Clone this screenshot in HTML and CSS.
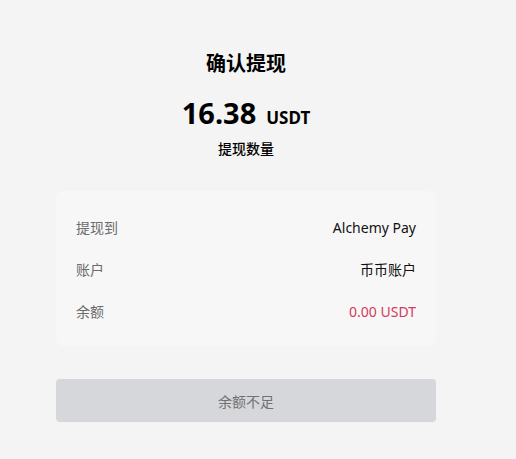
FILE: index.html
```html
<!DOCTYPE html>
<html lang="zh-CN">

<head>
  <meta charset="UTF-8">
  <meta name="viewport" content="width=device-width, initial-scale=1.0">
  <title>确认提现</title>
  <link rel="stylesheet" href="styles.css">
</head>

<body>
  <div class="page">
    <h1 class="title">确认提现</h1>
    <div class="amount">
      <span class="num">16.38</span>
      <span class="unit">USDT</span>
    </div>
    <div class="amount-label">提现数量</div>

    <div class="card">
      <div class="row">
        <span class="label">提现到</span>
        <span class="value">Alchemy Pay</span>
      </div>
      <div class="row">
        <span class="label">账户</span>
        <span class="value">币币账户</span>
      </div>
      <div class="row">
        <span class="label">余额</span>
        <span class="value red">0.00 USDT</span>
      </div>
    </div>

    <button class="btn" disabled>余额不足</button>
  </div>
</body>

</html>
```
FILE: styles.css
```css
html,body {
  margin: 0;
  padding: 0;
  background: #f4f4f4;
}
body {
  font-family: "Noto Sans", "Noto Sans CJK SC", sans-serif;
  color: #000;
}
.page {
  width: 380px;
  margin-left: 56px;
  padding-top: 50px;
  display: flex;
  flex-direction: column;
  align-items: center;
}
.title {
  margin: 0;
  font-size: 20px;
  font-weight: 700;
  line-height: 28px;
}
.amount {
  margin-top: 15px;
  display: flex;
  align-items: baseline;
  gap: 10px;
}
.num {
  font-size: 29px;
  font-weight: 700;
  line-height: 40px;
}
.unit {
  font-size: 17px;
  font-weight: 700;
}
.amount-label {
  margin-top: 6px;
  font-size: 14px;
  font-weight: 500;
  line-height: 20px;
}
.card {
  align-self: stretch;
  margin-top: 32px;
  background: #f7f7f7;
  border-radius: 8px;
  padding: 15px 20px 14px;
}
.row {
  display: flex;
  justify-content: space-between;
  align-items: center;
  height: 42px;
  font-size: 14px;
}
.label {
  color: #6b6b6b;
}
.value {
  color: #111;
}
.red {
  color: #d33a5c;
}
.btn {
  align-self: stretch;
  margin-top: 33px;
  height: 43px;
  border: none;
  border-radius: 4px;
  background: #d6d7da;
  color: #717173;
  font-family: inherit;
  font-size: 14px;
}
```
